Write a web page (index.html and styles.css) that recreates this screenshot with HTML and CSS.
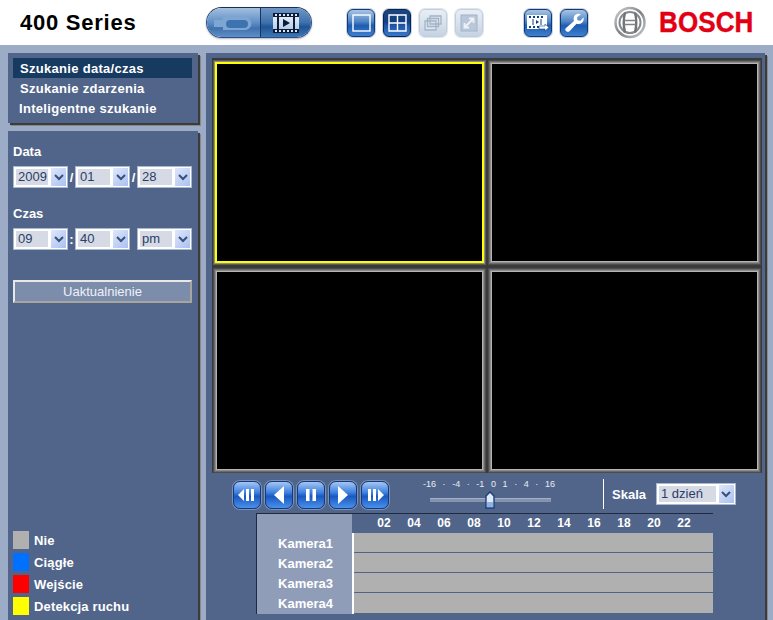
FILE: index.html
```html
<!DOCTYPE html>
<html lang="en">
<head>
<meta charset="UTF-8">
<title>400 Series</title>
<link rel="stylesheet" href="styles.css">
</head>
<body>
<svg class="defs" width="0" height="0">
  <defs>
    <linearGradient id="chrome" x1="0" y1="0" x2="1" y2="1">
      <stop offset="0" stop-color="#d0d2d4"/>
      <stop offset="0.5" stop-color="#7d8287"/>
      <stop offset="1" stop-color="#c8cacc"/>
    </linearGradient>
    <linearGradient id="film" x1="0" y1="0" x2="0" y2="1">
      <stop offset="0" stop-color="#f2f6fb"/>
      <stop offset="1" stop-color="#a8c4e4"/>
    </linearGradient>
  </defs>
</svg>

<header class="top">
  <h1 class="title">400 Series</h1>

  <div class="mode-pill">
    <div class="mode mode-live">
      <svg width="44" height="20" viewBox="0 0 44 20"><path d="M2 7h9v-3h22a6 6 0 0 1 0 13h-22v-3h-9z" fill="#7fa6d2"/><rect x="14" y="7" width="22" height="8" rx="4" fill="#3d74b0"/></svg>
    </div>
    <div class="mode mode-play">
      <svg width="28" height="22" viewBox="0 0 28 22"><rect x="1" y="1" width="26" height="20" fill="url(#film)"/><path d="M1 1h26v4h-26zM1 17h26v4h-26z" fill="#0b1c3a"/><path d="M3 2h2v2h-2zM7 2h2v2h-2zM11 2h2v2h-2zM15 2h2v2h-2zM19 2h2v2h-2zM23 2h2v2h-2zM3 18h2v2h-2zM7 18h2v2h-2zM11 18h2v2h-2zM15 18h2v2h-2zM19 18h2v2h-2zM23 18h2v2h-2z" fill="#dbe6f2"/><path d="M5 5h2v12h-2zM21 5h2v12h-2z" fill="#0b1c3a"/><path d="M11 7l7 4-7 4z" fill="#0b1c3a"/></svg>
    </div>
  </div>

  <div class="tools">
    <div class="tool"><svg width="19" height="18" viewBox="0 0 19 18"><rect x="1" y="1" width="17" height="16" fill="none" stroke="#fff" stroke-width="1.400"/></svg></div>
    <div class="tool tool-on"><svg width="19" height="18" viewBox="0 0 19 18"><path d="M1 1h17v16h-17zM9.500 1v16M1 9h17" fill="none" stroke="#fff" stroke-width="1.400"/></svg></div>
    <div class="tool tool-off"><svg width="20" height="18" viewBox="0 0 20 18"><path d="M7 2h11v8h-11zM4.500 4.500h11v8h-11zM2 7h11v9h-11z" fill="#dbe4ee" stroke="#a3b3c6" stroke-width="1.300"/></svg></div>
    <div class="tool tool-off"><svg width="20" height="18" viewBox="0 0 20 18"><rect x="2" y="1" width="16" height="16" fill="#b9c7d8" stroke="#a3b3c6"/><path d="M6 13l8-8M10 4.500h4.500v4.500M5.500 9v4.500h4.500" fill="none" stroke="#eef2f7" stroke-width="1.800"/></svg></div>
  </div>

  <div class="tools tools-right">
    <div class="tool"><svg width="24" height="20" viewBox="0 0 24 20"><rect x="1" y="2" width="20" height="14" fill="#fff"/><path d="M3 3h2v2h-2zM7 3h2v2h-2zM11 3h2v2h-2zM15 3h2v2h-2zM3 13h2v2h-2zM7 13h2v2h-2zM11 13h2v2h-2zM15 13h2v2h-2z" fill="#123f80"/><path d="M7 6v6M15 6v6" stroke="#123f80"/><path d="M10 7l3 2-3 2z" fill="#123f80"/><path d="M13 13h6v-2l4 3.500-4 3.500v-2h-6z" fill="#fff" stroke="#123f80" stroke-width="0.600"/></svg></div>
    <div class="tool"><svg width="22" height="22" viewBox="0 0 22 22"><path d="M3 19c-1-1-1-2 0-3l8-7c-1-3 0-6 3-7 1.500-.5 3-.3 4 .2l-4 3 .5 3 3 .5 3-3.500c.5 2 0 4-1.500 5.500-1.500 1.200-3.500 1.500-5.500 1l-7 7.500c-1 1-2.500 .8-3.500-.2z" fill="#fff"/></svg></div>
  </div>

  <svg class="bosch-mark" width="32" height="33" viewBox="0 0 32 33">
    <circle cx="16" cy="16.500" r="14.500" fill="#fff" stroke="url(#chrome)" stroke-width="2.500"/>
    <circle cx="16" cy="16.500" r="10.500" fill="none" stroke="#85898e" stroke-width="2"/>
    <path d="M11 6.500c-1.500 6-1.500 14 0 20M21 6.500c1.500 6 1.500 14 0 20" fill="none" stroke="#6f7479" stroke-width="2.400"/>
    <path d="M10 14.500h12M10 18.500h12" fill="none" stroke="#7d8287" stroke-width="1.400"/>
  </svg>
  <span class="bosch-word">BOSCH</span>
</header>

<div class="content">
  <aside class="side">
    <nav class="panel menu">
      <a class="menu-item menu-item-on">Szukanie data/czas</a>
      <a class="menu-item">Szukanie zdarzenia</a>
      <a class="menu-item menu-item-last">Inteligentne szukanie</a>
    </nav>

    <section class="panel search">
      <label class="field-label">Data</label>
      <div class="field-row">
        <div class="drop"><span class="drop-text">2009</span><span class="drop-btn"><svg width="10" height="7" viewBox="0 0 10 7"><path d="M1 1l4 4 4-4" fill="none" stroke="#3a5078" stroke-width="2"/></svg></span></div>
        <span class="sep">/</span>
        <div class="drop"><span class="drop-text">01</span><span class="drop-btn"><svg width="10" height="7" viewBox="0 0 10 7"><path d="M1 1l4 4 4-4" fill="none" stroke="#3a5078" stroke-width="2"/></svg></span></div>
        <span class="sep">/</span>
        <div class="drop"><span class="drop-text">28</span><span class="drop-btn"><svg width="10" height="7" viewBox="0 0 10 7"><path d="M1 1l4 4 4-4" fill="none" stroke="#3a5078" stroke-width="2"/></svg></span></div>
      </div>

      <label class="field-label field-label-time">Czas</label>
      <div class="field-row">
        <div class="drop"><span class="drop-text">09</span><span class="drop-btn"><svg width="10" height="7" viewBox="0 0 10 7"><path d="M1 1l4 4 4-4" fill="none" stroke="#3a5078" stroke-width="2"/></svg></span></div>
        <span class="sep">:</span>
        <div class="drop"><span class="drop-text">40</span><span class="drop-btn"><svg width="10" height="7" viewBox="0 0 10 7"><path d="M1 1l4 4 4-4" fill="none" stroke="#3a5078" stroke-width="2"/></svg></span></div>
        <span class="sep"></span>
        <div class="drop"><span class="drop-text">pm</span><span class="drop-btn"><svg width="10" height="7" viewBox="0 0 10 7"><path d="M1 1l4 4 4-4" fill="none" stroke="#3a5078" stroke-width="2"/></svg></span></div>
      </div>

      <button class="update-btn" type="button">Uaktualnienie</button>

      <ul class="legend">
        <li><span class="swatch swatch-none"></span>Nie</li>
        <li><span class="swatch swatch-cont"></span>Ciągłe</li>
        <li><span class="swatch swatch-input"></span>Wejście</li>
        <li><span class="swatch swatch-motion"></span>Detekcja ruchu</li>
      </ul>
    </section>
  </aside>

  <main class="panel main">
    <div class="video-frame">
      <div class="cell cell-on"></div>
      <div class="cell"></div>
      <div class="cell"></div>
      <div class="cell"></div>
    </div>

    <div class="controls">
      <div class="transport">
        <div class="play-btn"><svg width="20" height="14" viewBox="0 0 20 14"><path d="M7 1v12l-6-6zM9 1h3v12h-3zM14 1h3v12h-3z" fill="#fff"/></svg></div>
        <div class="play-btn"><svg width="14" height="20" viewBox="0 0 14 20"><path d="M12 1v18l-10-9z" fill="#fff"/></svg></div>
        <div class="play-btn"><svg width="12" height="14" viewBox="0 0 12 14"><path d="M1 1h3.500v12h-3.500zM7.500 1h3.500v12h-3.500z" fill="#fff"/></svg></div>
        <div class="play-btn"><svg width="14" height="20" viewBox="0 0 14 20"><path d="M2 1v18l10-9z" fill="#fff"/></svg></div>
        <div class="play-btn"><svg width="20" height="14" viewBox="0 0 20 14"><path d="M3 1h3v12h-3zM8 1h3v12h-3zM13 1v12l6-6z" fill="#fff"/></svg></div>
      </div>

      <div class="speed">
        <div class="speed-scale"><span>-16</span><span>·</span><span>-4</span><span>·</span><span>-1</span><span>0</span><span>1</span><span>·</span><span>4</span><span>·</span><span>16</span></div>
        <div class="speed-track">
          <svg class="speed-thumb" width="10" height="18" viewBox="0 0 10 18"><path d="M1 5l4-4 4 4v12h-8z" fill="#dfeaf8" stroke="#1c3f78" stroke-width="1.400"/><path d="M2 11h6v5h-6z" fill="#8fb2e0"/></svg>
        </div>
      </div>

      <div class="scale">
        <span class="scale-label">Skala</span>
        <div class="drop drop-scale"><span class="drop-text">1 dzień</span><span class="drop-btn"><svg width="10" height="7" viewBox="0 0 10 7"><path d="M1 1l4 4 4-4" fill="none" stroke="#3a5078" stroke-width="2"/></svg></span></div>
      </div>
    </div>

    <div class="timeline">
      <div class="tl-names">
        <span>Kamera1</span>
        <span>Kamera2</span>
        <span>Kamera3</span>
        <span>Kamera4</span>
      </div>
      <div class="tl-body">
        <div class="tl-hours"><span>02</span><span>04</span><span>06</span><span>08</span><span>10</span><span>12</span><span>14</span><span>16</span><span>18</span><span>20</span><span>22</span></div>
        <div class="tl-rows">
          <div class="tl-row"></div>
          <div class="tl-row"></div>
          <div class="tl-row"></div>
          <div class="tl-row"></div>
        </div>
      </div>
    </div>
  </main>
</div>
</body>
</html>
```

FILE: styles.css
```css
html, body {
  margin: 0;
  padding: 0;
  height: 620px;
  overflow: hidden;
}

body {
  font-family: "Liberation Sans", Arial, sans-serif;
  background-color: #9dacc6;
  color: #fff;
  font-size: 13px;
}

.defs {
  position: absolute;
}

/* Header */
.top {
  display: flex;
  align-items: center;
  height: 45px;
  background-color: #fff;
  padding-left: 20px;
  box-sizing: border-box;
}

.title {
  width: 186px;
  margin: 0;
  color: #000;
  font-size: 22px;
  font-weight: bold;
  letter-spacing: 0.75px;
}

.mode-pill {
  display: flex;
  width: 106px;
  height: 31px;
  box-sizing: border-box;
  border: 1px solid #2c4f80;
  border-top-color: #1c2f4e;
  border-radius: 16px;
  overflow: hidden;
  box-shadow: 0 1px 2px #b0b6c0;
}

.mode {
  display: flex;
  align-items: center;
  justify-content: center;
}

.mode-live {
  width: 53px;
  background: linear-gradient(#a4bfe0, #5f8fc6 50%, #3f71ac 70%, #5f8fc6);
}

.mode-play {
  flex: 1;
  border-left: 1px solid #16365e;
  background: linear-gradient(#6f97c6, #3f71ac 50%, #1f5596 65%, #3f76b4);
}

.tools {
  display: flex;
  gap: 8px;
  margin-left: 35px;
}

.tools-right {
  margin-left: 41px;
}

.tool {
  display: flex;
  align-items: center;
  justify-content: center;
  width: 28px;
  height: 28px;
  box-sizing: border-box;
  border: 1px solid #123a78;
  border-radius: 6px;
  background: linear-gradient(#a9c4e4, #4f84c4 45%, #1d5cb0 60%, #3f80d0);
  box-shadow: 0 0 0 1px #c8d2de;
}

.tool-on {
  border-color: #0a2450;
  background: linear-gradient(#1c4680, #123f80 45%, #1d55a8 60%, #3a78c8);
}

.tool-off {
  border-color: #c2cedc;
  background: linear-gradient(#e8eef5, #d8e2ed 50%, #c4d2e2);
  box-shadow: 0 0 0 1px #dfe5ec;
}

.bosch-mark {
  margin-left: 26px;
}

.bosch-word {
  margin-left: 13px;
  color: #e20015;
  font-size: 26px;
  font-weight: bold;
  letter-spacing: 0.1px;
  transform: scaleY(1.12);
  -webkit-text-stroke: 0.4px #e20015;
}

/* Layout */
.content {
  display: flex;
  gap: 8px;
  padding: 8px 0 0 8px;
  height: 575px;
  box-sizing: border-box;
}

.side {
  display: flex;
  flex-direction: column;
  gap: 8px;
  width: 190px;
}

.panel {
  background-color: #51658a;
  box-shadow: 2px 2px 0 #3c3c3c, 3px 3px 0 #888;
}

/* Menu */
.menu {
  display: flex;
  flex-direction: column;
  padding: 5px 6px 4px 5px;
  height: 61px;
}

.menu-item {
  height: 20px;
  line-height: 21px;
  padding-left: 7px;
  font-weight: bold;
  font-size: 13px;
  letter-spacing: 0.3px;
}

.menu-item-on {
  background-color: #163a60;
}

.menu-item-last {
  padding-left: 6px;
}

/* Search form */
.search {
  flex: 1;
  display: flex;
  flex-direction: column;
  padding: 13px 6px 5px 5px;
}

.field-label {
  height: 16px;
  line-height: 16px;
  font-weight: bold;
  font-size: 13px;
  margin-bottom: 6px;
}

.field-label-time {
  margin-top: 18px;
}

.field-row {
  display: flex;
  align-items: center;
  justify-content: space-between;
}

.sep {
  width: 7px;
  text-align: center;
  font-weight: bold;
}

.drop {
  display: flex;
  width: 55px;
  height: 22px;
  box-sizing: border-box;
  border: 1px solid #a8b8d0;
  background-color: #fff;
  padding: 1px;
}

.drop-text {
  flex: 1;
  background-color: #d5dae5;
  color: #2c3e66;
  font-size: 13px;
  line-height: 16px;
  padding-left: 2px;
  margin: 1px 3px 1px 1px;
}

.drop-btn {
  display: flex;
  align-items: center;
  justify-content: center;
  width: 15px;
  background: linear-gradient(135deg, #dfe8fb, #a9c0f0);
}

.update-btn {
  height: 23px;
  margin-top: 30px;
  padding: 0;
  box-sizing: border-box;
  border: 2px solid;
  border-color: #e8e8e8 #a8a69c #a8a69c #e8e8e8;
  background-color: #7b8dab;
  color: #eef1f6;
  font-family: inherit;
  font-size: 13px;
}

.legend {
  list-style: none;
  margin: auto 0 0;
  padding: 0;
  display: flex;
  flex-direction: column;
  gap: 4px;
}

.legend li {
  display: flex;
  align-items: center;
  gap: 5px;
  height: 18px;
  font-weight: bold;
  font-size: 13px;
  letter-spacing: 0.15px;
}

.swatch {
  width: 16px;
  height: 18px;
}

.swatch-none { background-color: #b0b0b0; }
.swatch-cont { background-color: #0070ff; }
.swatch-input { background-color: #ff0000; }
.swatch-motion { background-color: #ffff00; }

/* Main */
.main {
  width: 559px;
  padding: 5px 0 0 6px;
  box-sizing: border-box;
}

.video-frame {
  display: grid;
  grid-template-columns: 265px 265px;
  grid-template-rows: 197px 197px;
  column-gap: 10px;
  row-gap: 11px;
  width: 550px;
  height: 415px;
  box-sizing: border-box;
  padding: 6px 5px 4px;
  background-color: #3a3a3a;
}

.cell {
  background-color: #000;
  box-shadow: 0 0 0 1px #b4b4b4, 0 0 0 2px #8c8c8c, 0 0 0 3px #6a6a6a, 0 0 0 4px #4c4c4c;
}

.cell-on {
  box-shadow: 0 0 0 2px #ffff00, 0 0 0 3px #8c8c8c, 0 0 0 4px #5a5a5a;
}

.controls {
  display: flex;
  height: 40px;
}

.transport {
  display: flex;
  gap: 4px;
  margin: 8px 0 0 21px;
}

.play-btn {
  display: flex;
  align-items: center;
  justify-content: center;
  width: 28px;
  height: 28px;
  box-sizing: border-box;
  border: 1px solid #0f3a86;
  border-radius: 7px;
  background: linear-gradient(#a6c6f2, #3f82e0 40%, #1a58c0 55%, #4a92ea);
  box-shadow: 0 0 0 1px #7f90b0;
}

.speed {
  width: 132px;
  margin: 5px 0 0 34px;
}

.speed-scale {
  display: flex;
  justify-content: space-between;
  font-size: 9px;
  line-height: 12px;
  color: #e8ecf4;
}

.speed-track {
  position: relative;
  height: 3px;
  margin: 8px 4px 0 7px;
  background-color: #8494b0;
  border-top: 1px solid #a4b0c6;
}

.speed-thumb {
  position: absolute;
  left: 55px;
  top: -8px;
}

.scale {
  display: flex;
  align-items: center;
  gap: 10px;
  height: 30px;
  margin: 6px 0 0 48px;
  padding-left: 8px;
  border-left: 1px solid #fff;
}

.scale-label {
  font-weight: bold;
  font-size: 13px;
}

.drop-scale {
  width: 80px;
}

.timeline {
  display: flex;
  width: 457px;
  height: 101px;
  margin-left: 44px;
  box-sizing: border-box;
  border-top: 1px solid #1f2a40;
  border-left: 1px solid #1f2a40;
}

.tl-names {
  display: flex;
  flex-direction: column;
  justify-content: flex-end;
  align-items: flex-end;
  width: 95px;
  padding-right: 19px;
  box-sizing: border-box;
  background-color: #8f9db8;
  font-weight: bold;
  font-size: 13px;
}

.tl-names span {
  height: 20px;
  line-height: 20px;
}

.tl-body {
  flex: 1;
  display: flex;
  flex-direction: column;
}

.tl-hours {
  display: flex;
  height: 19px;
  padding-left: 17px;
  font-weight: bold;
  font-size: 12px;
  line-height: 19px;
}

.tl-hours span {
  width: 30px;
  text-align: center;
}

.tl-rows {
  flex: 1;
  border-left: 2px solid #fff;
}

.tl-row {
  height: 19px;
  background-color: #b0b0b0;
  border-bottom: 1px solid #51658a;
}

.tl-row:last-child {
  height: 20px;
  border-bottom: none;
}
```
